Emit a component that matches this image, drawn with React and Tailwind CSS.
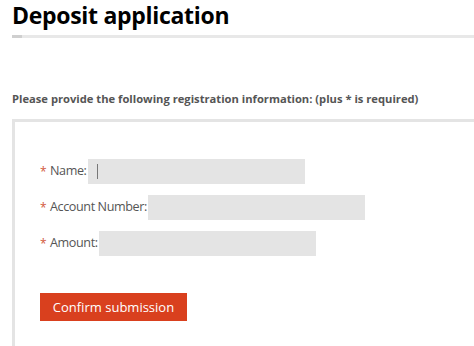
import React from "react";

const fields = [
  { label: "Name:", caret: true },
  { label: "Account Number:" },
  { label: "Amount:" },
];

export default function App() {
  return (
    <div
      className="w-[474px] h-[346px] overflow-hidden bg-white"
      style={{ fontFamily: '"Open Sans", "Noto Sans", sans-serif' }}
    >
      {/* Header */}
      <h1 className="pl-3 pt-[1px] text-[23px] leading-[28px] font-bold text-black tracking-[-0.3px]">
        Deposit application
      </h1>
      <div className="ml-3 mt-[6px] h-[3px] flex bg-[#e8e8e8]">
        <div className="w-[10px] bg-[#cfcfcf]" />
      </div>

      <p className="pl-3 mt-[53px] text-[11.2px] leading-[16px] font-bold text-[#555]">
        Please provide the following registration information: (plus * is required)
      </p>

      {/* Form box */}
      <div className="ml-3 mt-[12px] h-[300px] border-l-[3px] border-t-[3px] border-[#e4e4e4] pl-[25px] pt-[37px]">
        <div className="flex flex-col gap-[11px]">
          {fields.map((f) => (
            <div key={f.label} className="flex items-center h-[25px]">
              <span className="w-[10px] text-[12px] text-[#d2593a]">*</span>
              <span className="text-[12.6px] text-[#555] tracking-[-0.4px]">{f.label}</span>
              <div className="ml-[1px] w-[217px] h-[25px] bg-[#e4e4e4] flex items-center pl-[9px]">
                {f.caret && <span className="w-px h-[15px] bg-[#777]" />}
              </div>
            </div>
          ))}
        </div>

        <button className="mt-[37px] w-[147px] h-[28px] bg-[#d9401e] text-white text-[13px] leading-none">
          Confirm submission
        </button>
      </div>
    </div>
  );
}
